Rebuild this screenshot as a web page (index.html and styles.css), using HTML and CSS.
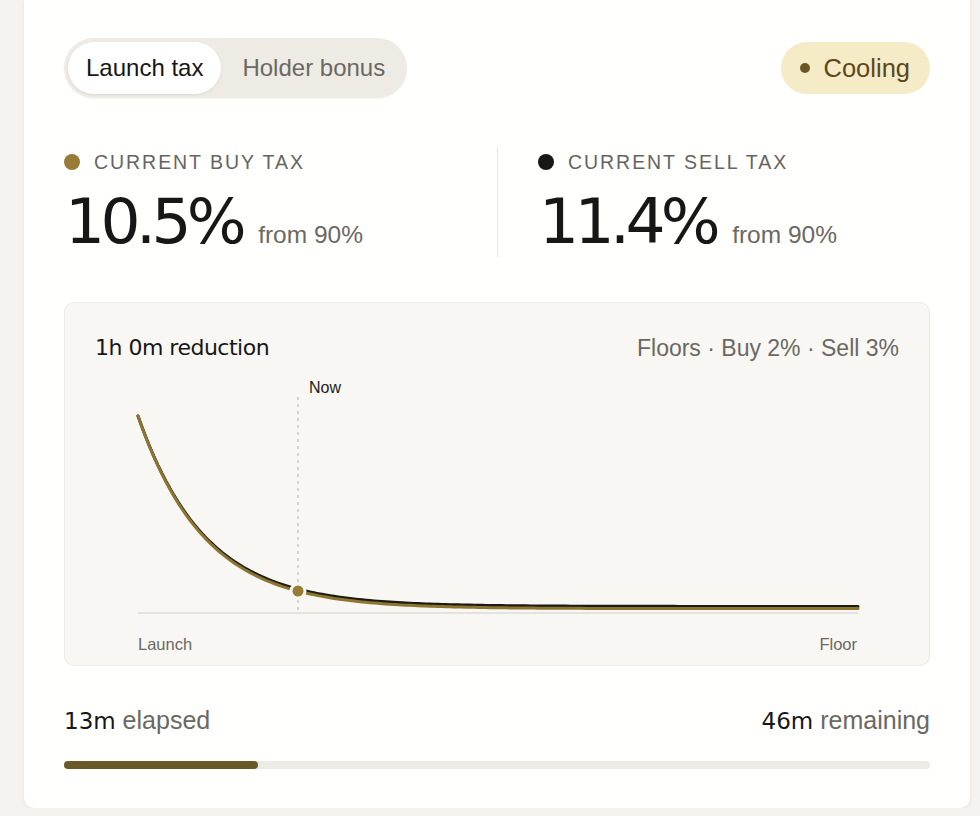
FILE: index.html
```html
<!DOCTYPE html>
<html>
<head>
  <link rel="stylesheet" href="styles.css">
</head>
<body>
  <div class="card">

    <div class="card-head">
      <div class="toggle">
        <span class="toggle-item toggle-item-active">Launch tax</span>
        <span class="toggle-item">Holder bonus</span>
      </div>
      <span class="status"><i class="status-dot"></i>Cooling</span>
    </div>

    <div class="stats">
      <div class="stat">
        <div class="stat-label"><i class="dot dot-buy"></i>CURRENT BUY TAX</div>
        <div class="stat-value"><span class="num big">10.5%</span><span class="stat-from">from 90%</span></div>
      </div>
      <div class="stat stat-right">
        <div class="stat-label"><i class="dot dot-sell"></i>CURRENT SELL TAX</div>
        <div class="stat-value"><span class="num big">11.4%</span><span class="stat-from">from 90%</span></div>
      </div>
    </div>

    <div class="chart">
      <div class="chart-head">
        <span class="num chart-title">1h 0m reduction</span>
        <span class="chart-floors">Floors · Buy 2% · Sell 3%</span>
      </div>
      <svg class="chart-svg" width="804" height="262" viewBox="95 363 804 262">
        <line x1="138" y1="613" x2="858" y2="613" stroke="#dddbd5" stroke-width="1.5" />
        <line x1="298" y1="397" x2="298" y2="611" stroke="#c9c7c1" stroke-width="1.5" stroke-dasharray="3 4" />
        <text x="309" y="393" class="chart-now">Now</text>
        <path id="curve-sell" fill="none" stroke="#1c1a14" stroke-width="3" stroke-linecap="round" stroke-linejoin="round" />
        <path id="curve-buy" fill="none" stroke="#8c7431" stroke-width="3" stroke-linecap="round" stroke-linejoin="round" />
        <circle cx="298" cy="591" r="7" fill="#977b37" stroke="#f8f7f3" stroke-width="3" />
      </svg>
      <div class="chart-axis">
        <span>Launch</span>
        <span>Floor</span>
      </div>
    </div>

    <div class="progress-text">
      <span><b class="num">13m</b> elapsed</span>
      <span><b class="num">46m</b> remaining</span>
    </div>
    <div class="progress">
      <div class="progress-fill" style="width: 22.4%"></div>
    </div>

  </div>

  <script>
    var TaxChart = TaxChart || {};

    TaxChart.draw = function() {
      var x0 = 138, x1 = 858, base = 613;
      var scale = 197 / 90;   // px per percent
      var k = 0.1798;         // decay per minute
      var minutes = 60;

      function curve(floor, start) {
        var d = '';
        for (var x = x0; x <= x1; x += 4) {
          var t = (x - x0) / (x1 - x0) * minutes;
          var tax = floor + (start - floor) * Math.exp(-k * t);
          var y = base - tax * scale;
          d += (x === x0 ? 'M' : 'L') + x + ' ' + y.toFixed(2) + ' ';
        }
        return d;
      }

      document.getElementById('curve-sell').setAttribute('d', curve(3, 90));
      document.getElementById('curve-buy').setAttribute('d', curve(2, 90));
    }

    TaxChart.draw();
  </script>
</body>
</html>
```

FILE: styles.css
```css
/* Page */

html, body {
  margin: 0;
  padding: 0;
}

body {
  background-color: #f4f3ef;
  font-family: "Liberation Sans", Arial, sans-serif;
  color: #171717;
}

.num {
  font-family: "DejaVu Sans", "Liberation Sans", sans-serif;
  font-weight: 400;
}

/* Card */

.card {
  width: 946px;
  box-sizing: border-box;
  margin: -2px 0 0 24px;
  padding: 40px 40px 39px;
  background-color: #fffffd;
  border-radius: 0 0 10px 10px;
  box-shadow: 0 1px 4px rgba(60, 50, 20, 0.08);
}

.card-head {
  display: flex;
  justify-content: space-between;
  align-items: center;
}

.toggle {
  display: flex;
  gap: 3px;
  padding: 4px;
  background-color: #eeebe5;
  border-radius: 999px;
  box-shadow: 0 1px 2px rgba(0, 0, 0, 0.04);
}

.toggle-item {
  height: 52px;
  line-height: 52px;
  padding: 0 18px;
  font-size: 24px;
  color: #6b6864;
  border-radius: 999px;
}

.toggle-item-active {
  background-color: #fff;
  color: #171717;
  box-shadow: 0 1px 3px rgba(0, 0, 0, 0.08);
}

.status {
  display: flex;
  align-items: center;
  gap: 14px;
  height: 52px;
  padding: 0 20px 0 19px;
  background-color: #f6ebc7;
  border-radius: 999px;
  font-size: 25.5px;
  color: #5c481b;
}

.status-dot {
  width: 10px;
  height: 10px;
  border-radius: 50%;
  background-color: #6b5524;
}

/* Stats */

.stats {
  display: grid;
  grid-template-columns: 1fr 1fr;
  margin-top: 49px;
}

.stat {
  padding-bottom: 3px;
}

.stat-right {
  border-left: 1px solid #e7e5e0;
  padding-left: 40px;
}

.stat-label {
  display: flex;
  align-items: center;
  gap: 14px;
  height: 30px;
  font-size: 19.5px;
  letter-spacing: 0.1em;
  color: #666461;
}

.dot {
  width: 16px;
  height: 16px;
  border-radius: 50%;
}

.dot-buy {
  background-color: #977b37;
}

.dot-sell {
  background-color: #171717;
}

.stat-value {
  display: flex;
  align-items: baseline;
  margin-top: 13px;
}

.big {
  font-size: 63px;
  line-height: 64px;
  letter-spacing: -4.6px;
  margin-left: 1px;
}

.stat-from {
  margin-left: 16px;
  font-size: 24.5px;
  color: #6b6864;
}

/* Chart */

.chart {
  margin-top: 45px;
  padding: 30px 30px 11px;
  background-color: #f8f7f3;
  border: 1px solid #edebe6;
  border-radius: 10px;
}

.chart-head {
  display: flex;
  justify-content: space-between;
  line-height: 30px;
  font-size: 23px;
}

.chart-title {
  font-size: 22px;
  letter-spacing: -0.5px;
  color: #171717;
}

.chart-floors {
  color: #6b6864;
}

.chart-svg {
  display: block;
}

.chart-now {
  font-family: "Liberation Sans", Arial, sans-serif;
  font-size: 16px;
  fill: #1c1c1c;
}

.chart-axis {
  display: flex;
  justify-content: space-between;
  margin-top: 9px;
  padding: 0 42px 0 43px;
  line-height: 20px;
  font-size: 16.5px;
  color: #6b6864;
}

/* Progress */

.progress-text {
  display: flex;
  justify-content: space-between;
  margin-top: 39px;
  line-height: 30px;
  font-size: 25px;
  color: #6b6864;
}

.progress-text b {
  color: #171717;
  font-size: 23px;
}

.progress {
  height: 8px;
  margin-top: 25px;
  background-color: #edebe5;
  border-radius: 4px;
}

.progress-fill {
  height: 100%;
  background-color: #6a5a27;
  border-radius: 4px;
}
```
